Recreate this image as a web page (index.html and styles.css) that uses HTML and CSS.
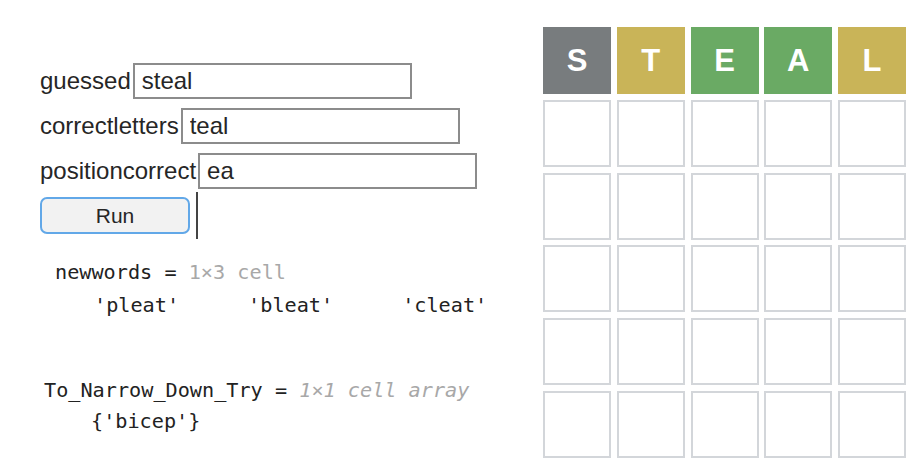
FILE: index.html
```html
<!DOCTYPE html>
<html>
<head>
<meta charset="utf-8">
<link rel="stylesheet" href="styles.css">
</head>
<body>
<div class="page">
  <div class="left">
    <div class="form">
      <div class="row"><span class="label">guessed</span><input class="field" value="steal"></div>
      <div class="row"><span class="label">correctletters</span><input class="field" value="teal"></div>
      <div class="row"><span class="label">positioncorrect</span><input class="field" value="ea"></div>
      <div class="row btnrow"><button class="run">Run</button><span class="caret"></span></div>
    </div>
    <div class="out out1">
      <pre class="line first">newwords = <span class="meta">1×3 cell</span></pre>
      <div class="line cells"><span>'pleat'</span><span>'bleat'</span><span>'cleat'</span></div>
    </div>
    <div class="out out2">
      <pre class="line second">To_Narrow_Down_Try = <span class="meta ital">1×1 cell array</span></pre>
      <pre class="line cells2">{'bicep'}</pre>
    </div>
  </div>
  <div class="board">
    <div class="tile absent">S</div>
    <div class="tile present">T</div>
    <div class="tile correct">E</div>
    <div class="tile correct">A</div>
    <div class="tile present">L</div>
    <div class="tile empty"></div><div class="tile empty"></div><div class="tile empty"></div><div class="tile empty"></div><div class="tile empty"></div>
    <div class="tile empty"></div><div class="tile empty"></div><div class="tile empty"></div><div class="tile empty"></div><div class="tile empty"></div>
    <div class="tile empty"></div><div class="tile empty"></div><div class="tile empty"></div><div class="tile empty"></div><div class="tile empty"></div>
    <div class="tile empty"></div><div class="tile empty"></div><div class="tile empty"></div><div class="tile empty"></div><div class="tile empty"></div>
    <div class="tile empty"></div><div class="tile empty"></div><div class="tile empty"></div><div class="tile empty"></div><div class="tile empty"></div>
  </div>
</div>
</body>
</html>
```

FILE: styles.css
```css
html, body {
  margin: 0;
  padding: 0;
  background: #ffffff;
}

.page {
  display: flex;
  width: 922px;
  height: 473px;
  overflow: hidden;
}

.left {
  width: 543px;
  box-sizing: border-box;
  padding-left: 40px;
  padding-top: 63px;
}

.form {
  display: flex;
  flex-direction: column;
  gap: 9px;
}

.row {
  display: flex;
  align-items: center;
  height: 36px;
}

.label {
  font-family: "Liberation Sans", Arial, sans-serif;
  font-size: 24px;
  color: #262626;
  margin-right: 2px;
}

.field {
  width: 279px;
  height: 36px;
  box-sizing: border-box;
  border: 2px solid #8c8c8c;
  padding: 0 7px;
  margin: 0;
  font-family: "Liberation Sans", Arial, sans-serif;
  font-size: 24px;
  color: #262626;
  background: #fff;
  outline: none;
}

.btnrow {
  height: 37px;
  margin-top: -1px;
}

.run {
  width: 150px;
  height: 37px;
  box-sizing: border-box;
  border: 2px solid #62a8e8;
  border-radius: 7px;
  background: #f2f2f2;
  font-family: "Liberation Sans", Arial, sans-serif;
  font-size: 21px;
  color: #262626;
  padding: 0;
  margin: 0;
}

.caret {
  width: 2px;
  height: 47px;
  background: #444;
  margin-left: 6px;
}

.out {
  font-family: "DejaVu Sans Mono", monospace;
  font-size: 20.2px;
  color: #222;
}

.line {
  margin: 0;
  font: inherit;
  line-height: 30px;
  white-space: pre;
}

.out1 {
  margin-top: 23px;
}

.first {
  padding-left: 15px;
}

.cells {
  display: flex;
  gap: 69px;
  padding-left: 54px;
  margin-top: 3px;
}

.out2 {
  margin-top: 56px;
}

.out2 .line {
  line-height: 28px;
}

.second {
  padding-left: 4px;
}

.cells2 {
  padding-left: 51px;
  margin-top: 3px;
}

.meta {
  color: #a8a8a8;
}

.ital {
  font-style: italic;
}

.board {
  margin-top: 27px;
  display: grid;
  grid-template-columns: repeat(5, 68px);
  grid-template-rows: repeat(6, 67px);
  column-gap: 5.75px;
  row-gap: 5.8px;
  align-content: start;
}

.tile {
  box-sizing: border-box;
  display: flex;
  align-items: center;
  justify-content: center;
  font-family: "Liberation Sans", Arial, sans-serif;
  font-weight: bold;
  font-size: 31px;
  color: #ffffff;
}

.empty {
  border: 2px solid #d3d6da;
}

.absent {
  background: #787c7e;
}

.present {
  background: #c9b458;
}

.correct {
  background: #6aaa64;
}
```
